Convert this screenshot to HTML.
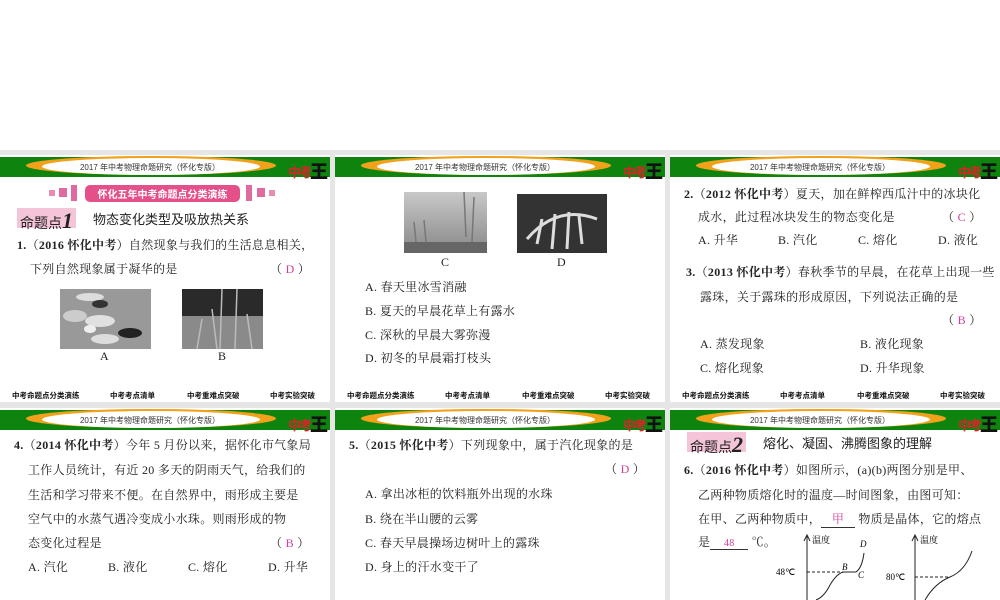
<!DOCTYPE html>
<html><head><meta charset="utf-8"><style>
*{margin:0;padding:0;box-sizing:border-box}
body{width:1000px;height:600px;background:#fff;position:relative;overflow:hidden;font-family:"Liberation Serif","Noto Serif CJK SC",serif;color:#222}
.gray{position:absolute;left:0;top:150px;width:1000px;height:450px;background:#e6e6e6}
.p{position:absolute;background:#fff;overflow:hidden}
.hb{position:absolute;left:0;top:2px;width:100%;height:20px;background:#0e840e}
.o1{position:absolute;left:26px;top:1px;width:250px;height:19px;border-radius:50%;background:#f2a11a}
.o2{position:absolute;left:42px;top:3px;width:218px;height:17px;border-radius:50%;background:#fff}
.ht{position:absolute;left:0;top:7px;width:300px;text-align:center;font:8px "Liberation Sans","Noto Sans CJK SC",sans-serif;color:#333}
.lg{position:absolute;right:4px;top:2px;font:bold 13px "Noto Sans CJK SC",sans-serif;color:#d8232a;letter-spacing:-2px}
.lg b{color:#111;font-size:18px;position:relative;top:1px}
.t{position:absolute;font-size:12px;white-space:nowrap;letter-spacing:0.3px}
.a{color:#d0409a}
.f{position:absolute;top:235px;font:bold 7.5px "Noto Sans CJK SC",sans-serif;color:#111}
.mt{position:absolute;background:#f4c4d8;font:14px "Noto Sans CJK SC",sans-serif;padding:0 3px;height:20px;line-height:20px}
.mt i{font:italic bold 22px "Liberation Serif",serif;}
.tt{position:absolute;font:13px "Noto Sans CJK SC",sans-serif}
.img{position:absolute}
</style></head><body>
<div class="gray"></div>

<div class="p" style="left:0;top:155px;width:330px;height:247px">
<div class="hb"></div><div class="o1"></div><div class="o2"></div><div class="ht">2017 年中考物理命题研究（怀化专版）</div><div class="lg">中考<b>王</b></div>
<div style="position:absolute;left:49px;top:35px;width:6px;height:6px;background:#e88cb4"></div>
<div style="position:absolute;left:59px;top:33px;width:8px;height:9px;background:#e06aa0"></div>
<div style="position:absolute;left:71px;top:30px;width:6px;height:16px;background:#e06aa0"></div>
<div style="position:absolute;left:85px;top:30px;width:155px;height:17px;background:#e4508a;border-radius:5px;color:#fff;font:bold 10px 'Noto Sans CJK SC',sans-serif;text-align:center;line-height:17px">怀化五年中考命题点分类演练</div>
<div style="position:absolute;left:246px;top:30px;width:6px;height:16px;background:#e06aa0"></div>
<div style="position:absolute;left:257px;top:33px;width:8px;height:9px;background:#e06aa0"></div>
<div style="position:absolute;left:269px;top:35px;width:6px;height:6px;background:#e88cb4"></div>
<div class="mt" style="left:17px;top:53px">命题点<i>1</i></div>
<div class="tt" style="left:93px;top:54px">物态变化类型及吸放热关系</div>
<div class="t" style="left:17px;top:81px"><b>1.</b>（<b>2016 怀化中考</b>）自然现象与我们的生活息息相关，</div>
<div class="t" style="left:30px;top:105px">下列自然现象属于凝华的是</div>
<div class="t" style="left:270px;top:105px">（ <span class="a">D</span> ）</div>
<svg class="img" style="left:60px;top:134px" width="91" height="60"><rect width="91" height="60" fill="#999"/><ellipse cx="30" cy="8" rx="14" ry="4" fill="#ddd"/><ellipse cx="15" cy="27" rx="12" ry="6" fill="#ccc"/><ellipse cx="40" cy="32" rx="15" ry="6" fill="#e0e0e0"/><ellipse cx="70" cy="44" rx="12" ry="5" fill="#222"/><ellipse cx="45" cy="50" rx="14" ry="5" fill="#ddd"/><ellipse cx="30" cy="40" rx="6" ry="4" fill="#eee"/><ellipse cx="40" cy="15" rx="8" ry="4" fill="#333"/></svg>
<svg class="img" style="left:182px;top:134px" width="81" height="60"><rect width="81" height="60" fill="#8a8a8a"/><rect width="81" height="27" fill="#2a2a2a"/><path d="M40 0L38 60M55 0L53 60M30 20L35 60M20 30L15 60M65 25L70 60" stroke="#bbb" stroke-width="1.5"/></svg>
<div class="t" style="left:100px;top:194px">A</div>
<div class="t" style="left:218px;top:194px">B</div>
<div class="f" style="left:12px">中考命题点分类演练</div><div class="f" style="left:110px">中考考点清单</div><div class="f" style="left:187px">中考重难点突破</div><div class="f" style="left:270px">中考实验突破</div>
</div>

<div class="p" style="left:335px;top:155px;width:330px;height:247px">
<div class="hb"></div><div class="o1"></div><div class="o2"></div><div class="ht">2017 年中考物理命题研究（怀化专版）</div><div class="lg">中考<b>王</b></div>
<svg class="img" style="left:69px;top:37px" width="83" height="61"><defs><linearGradient id="g1" x1="0" y1="0" x2="0" y2="1"><stop offset="0" stop-color="#c8c8c8"/><stop offset="1" stop-color="#888"/></linearGradient></defs><rect width="83" height="61" fill="url(#g1)"/><path d="M60 0L62 45M70 5L68 50M10 30L12 50M20 28L22 50" stroke="#777" stroke-width="1.5"/><rect y="50" width="83" height="11" fill="#666"/></svg>
<svg class="img" style="left:182px;top:39px" width="90" height="59"><rect width="90" height="59" fill="#333"/><path d="M10 45Q40 10 80 25M20 50L25 25M35 55L38 20M50 55L52 18M65 50L62 22" stroke="#ddd" stroke-width="3" fill="none"/></svg>
<div class="t" style="left:106px;top:100px">C</div>
<div class="t" style="left:222px;top:100px">D</div>
<div class="t" style="left:30px;top:123px">A. 春天里冰雪消融</div>
<div class="t" style="left:30px;top:147px">B. 夏天的早晨花草上有露水</div>
<div class="t" style="left:30px;top:171px">C. 深秋的早晨大雾弥漫</div>
<div class="t" style="left:30px;top:194px">D. 初冬的早晨霜打枝头</div>
<div class="f" style="left:12px">中考命题点分类演练</div><div class="f" style="left:110px">中考考点清单</div><div class="f" style="left:187px">中考重难点突破</div><div class="f" style="left:270px">中考实验突破</div>
</div>

<div class="p" style="left:670px;top:155px;width:330px;height:247px">
<div class="hb"></div><div class="o1"></div><div class="o2"></div><div class="ht">2017 年中考物理命题研究（怀化专版）</div><div class="lg">中考<b>王</b></div>
<div class="t" style="left:14px;top:30px"><b>2.</b>（<b>2012 怀化中考</b>）夏天，加在鲜榨西瓜汁中的冰块化</div>
<div class="t" style="left:28px;top:53px">成水，此过程冰块发生的物态变化是</div>
<div class="t" style="left:272px;top:53px">（ <span class="a">C</span> ）</div>
<div class="t" style="left:28px;top:76px">A. 升华</div><div class="t" style="left:108px;top:76px">B. 汽化</div><div class="t" style="left:188px;top:76px">C. 熔化</div><div class="t" style="left:268px;top:76px">D. 液化</div>
<div class="t" style="left:16px;top:108px"><b>3.</b>（<b>2013 怀化中考</b>）春秋季节的早晨，在花草上出现一些</div>
<div class="t" style="left:30px;top:133px">露珠，关于露珠的形成原因，下列说法正确的是</div>
<div class="t" style="left:272px;top:156px">（ <span class="a">B</span> ）</div>
<div class="t" style="left:30px;top:180px">A. 蒸发现象</div><div class="t" style="left:190px;top:180px">B. 液化现象</div>
<div class="t" style="left:30px;top:204px">C. 熔化现象</div><div class="t" style="left:190px;top:204px">D. 升华现象</div>
<div class="f" style="left:12px">中考命题点分类演练</div><div class="f" style="left:110px">中考考点清单</div><div class="f" style="left:187px">中考重难点突破</div><div class="f" style="left:270px">中考实验突破</div>
</div>

<div class="p" style="left:0;top:408px;width:330px;height:192px">
<div class="hb"></div><div class="o1"></div><div class="o2"></div><div class="ht">2017 年中考物理命题研究（怀化专版）</div><div class="lg">中考<b>王</b></div>
<div class="t" style="left:14px;top:28px"><b>4.</b>（<b>2014 怀化中考</b>）今年 5 月份以来，据怀化市气象局</div>
<div class="t" style="left:28px;top:53px">工作人员统计，有近 20 多天的阴雨天气，给我们的</div>
<div class="t" style="left:28px;top:78px">生活和学习带来不便。在自然界中，雨形成主要是</div>
<div class="t" style="left:28px;top:102px">空气中的水蒸气遇冷变成小水珠。则雨形成的物</div>
<div class="t" style="left:28px;top:126px">态变化过程是</div>
<div class="t" style="left:270px;top:126px">（ <span class="a">B</span> ）</div>
<div class="t" style="left:28px;top:150px">A. 汽化</div><div class="t" style="left:108px;top:150px">B. 液化</div><div class="t" style="left:188px;top:150px">C. 熔化</div><div class="t" style="left:268px;top:150px">D. 升华</div>
</div>

<div class="p" style="left:335px;top:408px;width:330px;height:192px">
<div class="hb"></div><div class="o1"></div><div class="o2"></div><div class="ht">2017 年中考物理命题研究（怀化专版）</div><div class="lg">中考<b>王</b></div>
<div class="t" style="left:14px;top:28px"><b>5.</b>（<b>2015 怀化中考</b>）下列现象中，属于汽化现象的是</div>
<div class="t" style="left:270px;top:52px">（ <span class="a">D</span> ）</div>
<div class="t" style="left:30px;top:77px">A. 拿出冰柜的饮料瓶外出现的水珠</div>
<div class="t" style="left:30px;top:102px">B. 绕在半山腰的云雾</div>
<div class="t" style="left:30px;top:126px">C. 春天早晨操场边树叶上的露珠</div>
<div class="t" style="left:30px;top:150px">D. 身上的汗水变干了</div>
</div>

<div class="p" style="left:670px;top:408px;width:330px;height:192px">
<div class="hb"></div><div class="o1"></div><div class="o2"></div><div class="ht">2017 年中考物理命题研究（怀化专版）</div><div class="lg">中考<b>王</b></div>
<div class="mt" style="left:17px;top:24px">命题点<i>2</i></div>
<div class="tt" style="left:93px;top:25px">熔化、凝固、沸腾图象的理解</div>
<div class="t" style="left:14px;top:53px"><b>6.</b>（<b>2016 怀化中考</b>）如图所示，(a)(b)两图分别是甲、</div>
<div class="t" style="left:28px;top:78px">乙两种物质熔化时的温度—时间图象，由图可知：</div>
<div class="t" style="left:28px;top:102px">在甲、乙两种物质中，<span style="display:inline-block;width:34px;border-bottom:1px solid #333;text-align:center" class="a">甲</span> 物质是晶体，它的熔点</div>
<div class="t" style="left:28px;top:125px">是<span style="display:inline-block;width:38px;border-bottom:1px solid #333;text-align:center;font-size:10px" class="a">48</span> ℃。</div>
<svg style="position:absolute;left:100px;top:125px" width="230" height="67" font-family="Liberation Serif" font-size="9">
<path d="M37 67V3M34 8L37 2L40 8" stroke="#222" fill="none"/><text x="42" y="10" font-family="Noto Serif CJK SC">温度</text>
<text x="6" y="42">48℃</text><path d="M37 39H74" stroke="#222" stroke-dasharray="3 2"/>
<path d="M46 67Q54 64 60 52Q67 40 74 39H86Q92 35 94 20" stroke="#222" fill="none"/>
<text x="72" y="37" font-style="italic">B</text><text x="88" y="45" font-style="italic">C</text><text x="90" y="14" font-style="italic">D</text>
<path d="M145 67V3M142 8L145 2L148 8" stroke="#222" fill="none"/><text x="150" y="10" font-family="Noto Serif CJK SC">温度</text>
<text x="116" y="47">80℃</text><path d="M145 44H180" stroke="#222" stroke-dasharray="3 2"/>
<path d="M155 67Q165 50 180 44Q195 38 202 18" stroke="#222" fill="none"/>
</svg>
</div>
</body></html>
